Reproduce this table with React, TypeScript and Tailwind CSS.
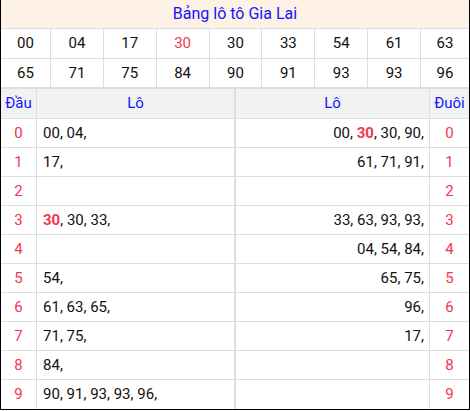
import React from "react";

const top1 = ["00", "04", "17", "30", "30", "33", "54", "61", "63"];
const top2 = ["65", "71", "75", "84", "90", "91", "93", "93", "96"];

type Item = { v: string; hot?: boolean };
const dau: Item[][] = [
  [{ v: "00" }, { v: "04" }],
  [{ v: "17" }],
  [],
  [{ v: "30", hot: true }, { v: "30" }, { v: "33" }],
  [],
  [{ v: "54" }],
  [{ v: "61" }, { v: "63" }, { v: "65" }],
  [{ v: "71" }, { v: "75" }],
  [{ v: "84" }],
  [{ v: "90" }, { v: "91" }, { v: "93" }, { v: "93" }, { v: "96" }],
];
const duoi: Item[][] = [
  [{ v: "00" }, { v: "30", hot: true }, { v: "30" }, { v: "90" }],
  [{ v: "61" }, { v: "71" }, { v: "91" }],
  [],
  [{ v: "33" }, { v: "63" }, { v: "93" }, { v: "93" }],
  [{ v: "04" }, { v: "54" }, { v: "84" }],
  [{ v: "65" }, { v: "75" }],
  [{ v: "96" }],
  [{ v: "17" }],
  [],
  [],
];

function List({ items }: { items: Item[] }) {
  return (
    <>
      {items.map((it, i) => (
        <React.Fragment key={i}>
          {i > 0 ? " " : ""}
          {it.hot ? <b className="font-bold text-[#f4364c]">{it.v}</b> : it.v},
        </React.Fragment>
      ))}
    </>
  );
}

export default function App() {
  const font = { fontFamily: "Roboto, 'Noto Sans', sans-serif" };
  return (
    <div className="w-[470px] bg-white text-[15px] text-[#111]" style={font}>
      <div className="border-x border-b border-black">
        <div className="h-[29px] bg-[#fef1e6] flex items-center justify-center text-[16px] text-[#1414ff] border-b border-[#dddddd]">
          Bảng lô tô Gia Lai
        </div>
        {[top1, top2].map((row, r) => (
          <div
            key={r}
            className={`grid grid-cols-[50px_repeat(7,1fr)_48px] h-[30px] ${
              r === 0 ? "border-b border-[#dddddd]" : "border-b-2 border-[#dddddd]"
            }`}
          >
            {row.map((n, i) => (
              <div
                key={i}
                className={`flex items-center justify-center ${
                  i < 8 ? "border-r border-[#dddddd]" : ""
                } ${r === 0 && i === 3 ? "text-[#f4364c]" : ""}`}
              >
                {n}
              </div>
            ))}
          </div>
        ))}
        <div className="grid grid-cols-[36px_197px_2px_194px_39px]">
          <div className="h-[30px] bg-[#f2f2f2] text-[#1414ff] flex items-center justify-center border-r border-b border-[#dddddd]">
            Đầu
          </div>
          <div className="h-[30px] bg-[#f2f2f2] text-[#1414ff] flex items-center justify-center border-b border-[#dddddd]">
            Lô
          </div>
          <div className="bg-[#dddddd]" />
          <div className="h-[30px] bg-[#f2f2f2] text-[#1414ff] flex items-center justify-center border-r border-b border-[#dddddd]">
            Lô
          </div>
          <div className="h-[30px] bg-[#f2f2f2] text-[#1414ff] flex items-center justify-center border-b border-[#dddddd]">
            Đuôi
          </div>
          {dau.map((items, i) => (
            <React.Fragment key={i}>
              <div
                className={`h-[29px] flex items-center justify-center text-[#f4364c] border-r border-[#dddddd] ${
                  i < 9 ? "border-b" : ""
                }`}
              >
                {i}
              </div>
              <div
                className={`h-[29px] flex items-center pl-[6px] border-[#dddddd] whitespace-nowrap ${
                  i < 9 ? "border-b" : ""
                }`}
              >
                <span>
                  <List items={items} />
                </span>
              </div>
              <div className="bg-[#dddddd]" />
              <div
                className={`h-[29px] flex items-center justify-end pr-[5px] border-r border-[#dddddd] whitespace-nowrap ${
                  i < 9 ? "border-b" : ""
                }`}
              >
                <span>
                  <List items={duoi[i]} />
                </span>
              </div>
              <div
                className={`h-[29px] flex items-center justify-center text-[#f4364c] border-[#dddddd] ${
                  i < 9 ? "border-b" : ""
                }`}
              >
                {i}
              </div>
            </React.Fragment>
          ))}
        </div>
      </div>
    </div>
  );
}
